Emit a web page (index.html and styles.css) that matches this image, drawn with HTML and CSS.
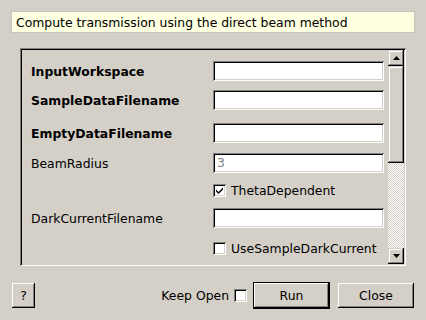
FILE: index.html
```html
<!DOCTYPE html>
<html>
<head>
<meta charset="utf-8">
<link rel="stylesheet" href="styles.css">
</head>
<body>
<div class="dialog">
  <div class="desc">Compute transmission using the direct beam method</div>
  <div class="frame">
    <div class="content">
      <div class="row r1"><span class="label bold">InputWorkspace</span><span class="input"></span></div>
      <div class="row r2"><span class="label bold">SampleDataFilename</span><span class="input"></span></div>
      <div class="row r3"><span class="label bold">EmptyDataFilename</span><span class="input"></span></div>
      <div class="row r4"><span class="label">BeamRadius</span><span class="input disabled">3</span></div>
      <div class="row r5 chkrow"><span class="label"></span><span class="check"><svg width="9" height="9" viewBox="0 0 9 9"><path d="M1 3.5 L3.5 6 L8 1.5 L8 3.5 L3.5 8 L1 5.5 Z" fill="#000"/></svg></span><span class="chklabel">ThetaDependent</span></div>
      <div class="row r6"><span class="label">DarkCurrentFilename</span><span class="input"></span></div>
      <div class="row r7 chkrow"><span class="label"></span><span class="check"></span><span class="chklabel">UseSampleDarkCurrent</span></div>
    </div>
    <div class="scrollbar">
      <div class="sbtn"><svg width="7" height="4" viewBox="0 0 7 4"><path d="M3.5 0 L7 4 L0 4 Z" fill="#000"/></svg></div>
      <div class="thumb"></div>
      <div class="trough"></div>
      <div class="sbtn"><svg width="7" height="4" viewBox="0 0 7 4"><path d="M0 0 L7 0 L3.5 4 Z" fill="#000"/></svg></div>
    </div>
  </div>
  <div class="bottom">
    <button class="btn help">?</button>
    <div class="spacer"></div>
    <span class="keep">Keep Open</span>
    <span class="check keepchk"></span>
    <button class="btn run">Run</button>
    <button class="btn close">Close</button>
  </div>
</div>
</body>
</html>
```
FILE: styles.css
```css
html, body {
  margin: 0;
  padding: 0;
  background: #d4d0c8;
  width: 426px;
  height: 320px;
  overflow: hidden;
}
body {
  font-family: "DejaVu Sans", sans-serif;
  font-size: 12px;
  color: #000;
}
.dialog {
  display: flex;
  flex-direction: column;
  padding: 11px 11px 0 11px;
}
.desc {
  height: 22px;
  box-sizing: border-box;
  border: 1px solid #c8c4bc;
  background: #ffffe1;
  padding: 0 0 0 4px;
  line-height: 21px;
  font-size: 12.4px;
}
.frame {
  margin: 15px 9px 0 9px;
  height: 218px;
  box-sizing: border-box;
  display: flex;
  padding: 2px;
  box-shadow: inset 1px 1px #808080, inset -1px -1px #fff, inset 2px 2px #000, inset -2px -2px #d4d0c8;
}
.content {
  flex: 1;
  padding: 11px 4px 0 9px;
  display: flex;
  flex-direction: column;
}
.row {
  display: flex;
  align-items: center;
  height: 20px;
}
.r2 { margin-top: 9px; }
.r3 { margin-top: 13px; }
.r4 { margin-top: 10px; }
.r5 { margin-top: 9px; height: 16px; }
.r6 { margin-top: 10px; }
.r7 { margin-top: 12px; height: 16px; }
.label {
  width: 182px;
  flex: none;
  font-size: 12.4px;
}
.bold { font-weight: bold; }
.input {
  flex: 1;
  height: 20px;
  box-sizing: border-box;
  background: #fff;
  box-shadow: inset 1px 1px #808080, inset -1px -1px #fff, inset 2px 2px #000, inset -2px -2px #d4d0c8;
  padding-left: 4px;
  line-height: 20px;
  font-size: 12.4px;
}
.input.disabled { color: #808080; }
.check {
  width: 13px;
  height: 13px;
  box-sizing: border-box;
  background: #fff;
  box-shadow: inset 1px 1px #808080, inset -1px -1px #fff, inset 2px 2px #000, inset -2px -2px #d4d0c8;
  display: flex;
  align-items: center;
  justify-content: center;
  flex: none;
}
.chklabel {
  margin-left: 5px;
  font-size: 12.4px;
}
.scrollbar {
  width: 16px;
  display: flex;
  flex-direction: column;
}
.sbtn, .thumb {
  background: #d4d0c8;
  box-shadow: inset -1px -1px #000, inset 1px 1px #d4d0c8, inset -2px -2px #808080, inset 2px 2px #fff;
  display: flex;
  align-items: center;
  justify-content: center;
}
.sbtn { height: 16px; flex: none; }
.thumb { height: 97px; flex: none; }
.trough {
  flex: 1;
  background: repeating-conic-gradient(#d4d0c8 0 25%, #fff 0 50%) 0 0 / 2px 2px;
}
.bottom {
  display: flex;
  align-items: center;
  margin-top: 16px;
  padding-right: 1px;
}
.btn {
  font-family: "DejaVu Sans", sans-serif;
  font-size: 12.4px;
  color: #000;
  background: #d4d0c8;
  border: none;
  margin: 0;
  padding: 0;
  height: 25px;
  box-sizing: border-box;
  box-shadow: inset -1px -1px #000, inset 1px 1px #fff, inset -2px -2px #808080, inset 2px 2px #d4d0c8;
}
.help { width: 23px; margin-left: 1px; }
.spacer { flex: 1; }
.keep { font-size: 12.4px; margin-right: 5px; }
.keepchk { margin-right: 6px; }
.run {
  width: 77px;
  height: 27px;
  box-shadow: inset 0 0 0 1px #000, inset -2px -2px #000, inset 2px 2px #fff, inset -3px -3px #808080;
}
.close { width: 76px; margin-left: 8px; }
```
